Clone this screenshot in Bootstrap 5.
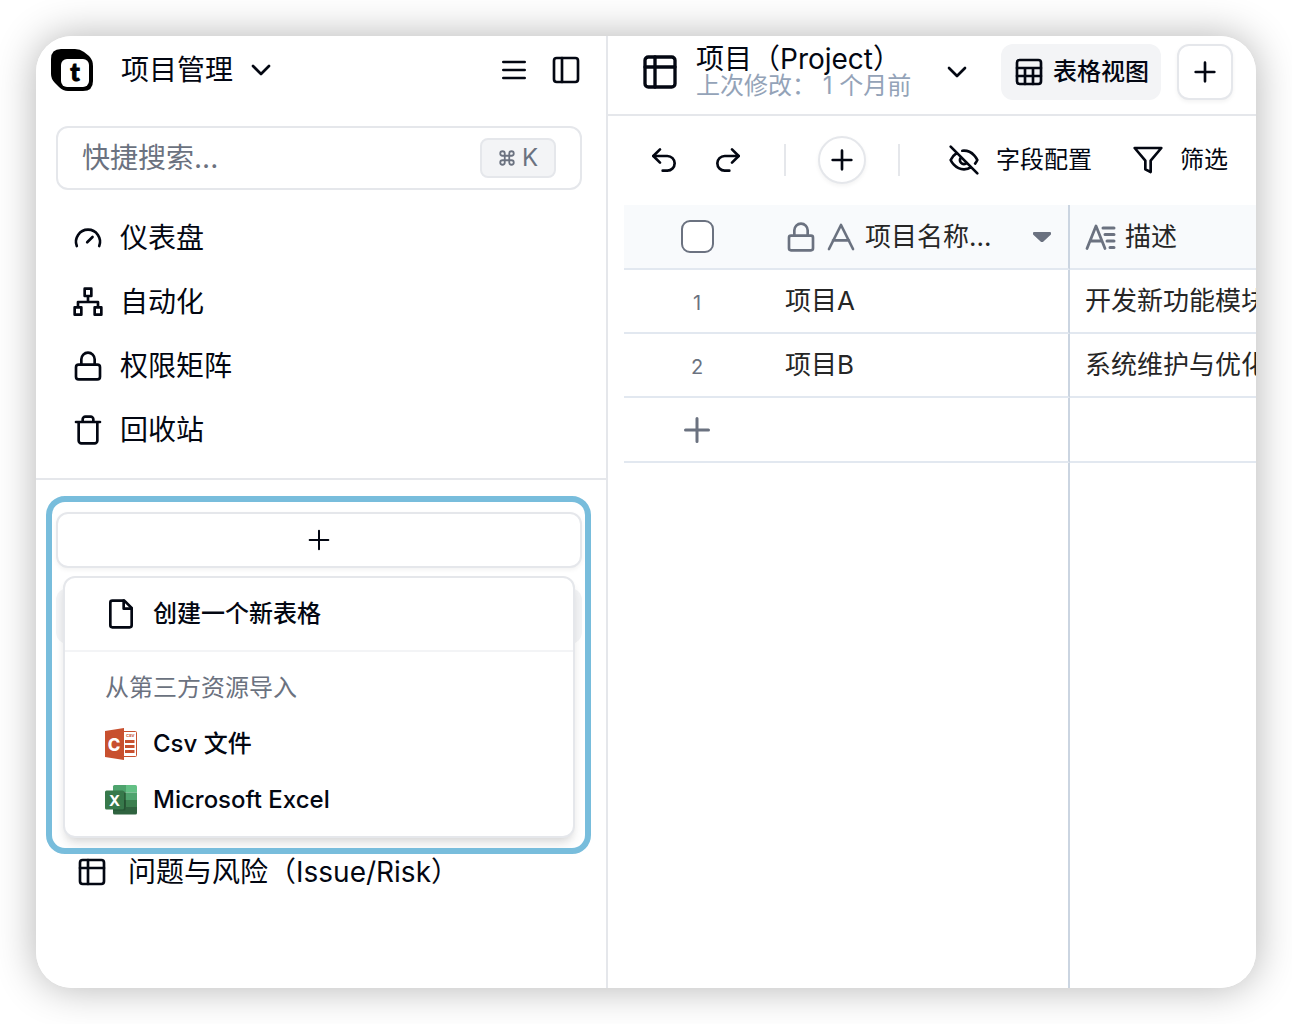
<!DOCTYPE html>
<html lang="zh-CN">
<head>
<meta charset="utf-8">
<meta name="viewport" content="width=device-width, initial-scale=1">
<title>项目管理</title>
<link href="https://cdn.jsdelivr.net/npm/bootstrap@5.3.0/dist/css/bootstrap.min.css" rel="stylesheet">
<style>
  :root { --ink: #030712; --line: #e5e7eb; --muted-ink: #6b7280; --soft: #f3f4f6; }
  body { font-family: Inter, "Noto Sans CJK SC", sans-serif; color: var(--ink); background: #fff; font-size: 28px; line-height: 40px; padding: 36px; }
  button, a { color: inherit; }
  a { text-decoration: none; }
  .plain-btn { border: 0; background: none; padding: 0; display: inline-flex; align-items: center; justify-content: center; }
  .ico { width: 32px; height: 32px; flex: none; fill: none; stroke: currentColor; stroke-width: 2; stroke-linecap: round; stroke-linejoin: round; display: block; }
  .ico-lg { width: 40px; height: 40px; }
  .app-window { min-height: calc(100vh - 72px); border-radius: 36px; overflow: hidden; background: #fff; }
  .app-shadow { border-radius: 36px; box-shadow: 0 0 40px rgba(0,0,0,.3); }

  .side { flex: 0 0 572px; border-right: 2px solid var(--line); }
  .side-head { height: 68px; padding: 0 24px 0 15px; }
  .brand-mark { width: 42px; height: 42px; flex: none; }
  .search-wrap { height: 64px; margin: 22px 24px 0 20px; padding: 0 24px; border: 2px solid var(--line); border-radius: 12px; }
  .search-wrap input { border: 0; padding: 0; font-size: 28px; line-height: 40px; color: var(--ink); box-shadow: none; background: none; }
  .search-wrap input::placeholder { color: var(--muted-ink); opacity: 1; }
  .key-hint { height: 40px; padding: 0 16px; gap: 6px; border: 2px solid var(--line); border-radius: 8px; background: var(--soft); color: var(--muted-ink); font-size: 24px; line-height: 36px; font-family: inherit; }
  .key-hint .ico { width: 18px; height: 18px; stroke-width: 2.4; }
  .side-nav { padding: 20px 24px 20px 20px; border-bottom: 2px solid var(--line); }
  .side-link { height: 56px; padding: 0 16px; border-radius: 12px; }
  .side-link.active { background: var(--soft); }
  .tables-area { padding: 32px 24px 0 20px; position: relative; }
  .outline-btn { border: 2px solid var(--line); border-radius: 12px; background: #fff; box-shadow: 0 2px 4px rgba(0,0,0,.05); height: 56px; }
  .table-list { padding-top: 20px; padding-bottom: 32px; }
  .table-list .side-link { padding: 0 20px; }
  .table-list .side-link + .side-link { margin-top: 200px; }

  .create-menu { position: absolute; top: 96px; left: 27px; right: 31px; border: 2px solid var(--line); border-radius: 12px; background: #fff; padding: 8px 0; box-shadow: 0 8px 12px -2px rgba(0,0,0,.1), 0 4px 8px -4px rgba(0,0,0,.1); font-size: 24px; z-index: 2; }
  .create-menu .menu-row { height: 56px; padding: 0 40px; width: 100%; justify-content: flex-start; }
  .create-menu hr { margin: 8px 0; border: 0; border-top: 2px solid var(--soft); opacity: 1; }
  .menu-row svg.pic { width: 32px; height: 32px; flex: none; }
  .callout-ring { position: absolute; top: 16px; left: 10px; right: 15px; height: 358px; border: 6px solid #78bddc; border-radius: 19px; pointer-events: none; z-index: 3; }

  .main-head { height: 80px; padding: 0 23px 6px 32px; border-bottom: 2px solid var(--line); }
  .head-title { font-size: 28px; line-height: 28px; font-weight: 400; }
  .head-sub { font-size: 24px; line-height: 26px; color: #94a3b8; }
  .head-toggle { margin-right: 28px; }
  .view-tab { height: 56px; padding: 0 12px; border-radius: 12px; background: var(--soft); font-size: 24px; }
  .add-view { width: 56px; }
  .tools { height: 88px; padding: 0 28px 0 40px; font-size: 24px; }
  .tool-rule { width: 2px; height: 32px; background: var(--line); flex: none; }
  .add-record { width: 48px; height: 48px; border-radius: 50%; }

  .sheet { margin: 1px 0 0 16px; }
  .sheet table { table-layout: fixed; border-collapse: separate; border-spacing: 0; width: 100%; height: 100%; font-size: 26px; line-height: 36px; color: #262626; }
  .sheet th, .sheet td { height: 64px; padding: 0 15px; border-bottom: 2px solid #e2e8f0; font-weight: 400; white-space: nowrap; overflow: hidden; vertical-align: middle; }
  .sheet thead th { height: 65px; background: #f8fafc; }
  .sheet .add-line td { height: 65px; }
  .sheet .name-cell { border-right: 2px solid #cbd5e1; padding-right: 10px; }
  .sheet .num-cell { text-align: center; color: var(--muted-ink); font-size: 20px; }
  .sheet .row-no { padding-top: 4px; }
  .sheet .filler td { height: auto; border-bottom: 0; }
  .tick.form-check-input { width: 33px; height: 33px; margin: 0; border: 2px solid var(--muted-ink); border-radius: 9px; float: none; }
  .gray { color: var(--muted-ink); }
</style>
<script src="https://cdn.jsdelivr.net/npm/bootstrap@5.3.0/dist/js/bootstrap.bundle.min.js"></script>
</head>
<body>
<div class="app-shadow">
<div class="app-window d-flex">

  <aside class="side d-flex flex-column">
    <header class="side-head d-flex align-items-center">
      <svg class="brand-mark" viewBox="0 0 42 42" aria-hidden="true">
        <path d="M10 0H24Q29 0 33 3L38 7Q42 11 42 17V32Q42 42 32 42H17Q12 42 8 38L4 34Q0 30 0 25V10Q0 0 10 0Z" fill="#000"/>
        <rect x="10" y="10" width="28" height="28" rx="6" fill="#fff"/>
        <text x="24" y="32" text-anchor="middle" font-family="Lato" font-weight="900" font-size="25" fill="#000" stroke="#000" stroke-width="1">t</text>
      </svg>
      <button class="plain-btn gap-2 ms-4 ps-1" type="button">项目管理
        <svg class="ico ms-1" viewBox="0 0 24 24"><path d="m6 9 6 6 6-6"/></svg></button>
      <button class="plain-btn ms-auto" type="button" aria-label="菜单"><svg class="ico" viewBox="0 0 24 24"><path d="M4 6h16M4 12h16M4 18h16"/></svg></button>
      <button class="plain-btn ms-3 ps-1" type="button" aria-label="侧栏"><svg class="ico" viewBox="0 0 24 24"><rect x="3" y="3" width="18" height="18" rx="2"/><path d="M9 3v18"/></svg></button>
    </header>

    <div class="search-wrap d-flex align-items-center">
      <input class="form-control" type="text" placeholder="快捷搜索..." aria-label="快捷搜索">
      <kbd class="key-hint d-flex align-items-center"><svg class="ico" viewBox="0 0 24 24"><path d="M15 6v12a3 3 0 1 0 3-3H6a3 3 0 1 0 3 3V6a3 3 0 1 0-3 3h12a3 3 0 1 0-3-3"/></svg>K</kbd>
    </div>

    <nav class="side-nav d-flex flex-column gap-2">
      <a class="side-link d-flex align-items-center gap-3" href="#"><svg class="ico" viewBox="0 0 24 24"><path d="m11.400 15.200 4-4M3.600 18a9 9 0 1 1 16.800 0"/></svg>仪表盘</a>
      <a class="side-link d-flex align-items-center gap-3" href="#"><svg class="ico" viewBox="0 0 24 24"><path d="M17 16h5v5.500h-5zM2 16h5v5.500H2zM9.500 2h5v5.500h-5zM4.500 16v-4h15v4M12 12V7.500"/></svg>自动化</a>
      <a class="side-link d-flex align-items-center gap-3" href="#"><svg class="ico" viewBox="0 0 24 24"><rect x="3" y="11" width="18" height="11" rx="2"/><path d="M7 11V7a5 5 0 0 1 10 0v4"/></svg>权限矩阵</a>
      <a class="side-link d-flex align-items-center gap-3" href="#"><svg class="ico" viewBox="0 0 24 24"><path d="M3 6h18M19 6v14c0 1-1 2-2 2H7c-1 0-2-1-2-2V6M8 6V4c0-1 1-2 2-2h4c1 0 2 1 2 2v2"/></svg>回收站</a>
    </nav>

    <section class="tables-area">
      <button class="plain-btn outline-btn w-100" type="button" aria-label="新建"><svg class="ico" viewBox="0 0 24 24"><path d="M5 12h14M12 5v14" stroke-width="1.500"/></svg></button>
      <div class="table-list">
        <div class="side-link active"></div>
        <a class="side-link d-flex align-items-center" href="#"><svg class="ico me-3" viewBox="0 0 24 24"><rect x="3" y="3" width="18" height="18" rx="2"/><path d="M3 9h18M9 3v18"/></svg><span class="ps-1">问题与风险（Issue/Risk）</span></a>
      </div>

      <div class="create-menu">
        <button class="plain-btn menu-row gap-3 fw-medium" type="button"><svg class="ico" viewBox="0 0 24 24"><path d="M14.500 2H5.500A1.500 1.500 0 0 0 4 3.500v17A1.500 1.500 0 0 0 5.500 22h13a1.500 1.500 0 0 0 1.500-1.500V7.500L14.500 2z"/><path d="M14 2v6h6"/></svg>创建一个新表格</button>
        <hr>
        <div class="menu-row d-flex align-items-center gray">从第三方资源导入</div>
        <button class="plain-btn menu-row gap-3 fw-medium" type="button">
          <svg class="pic" viewBox="0 0 32 32" aria-hidden="true"><rect x="17" y="3.500" width="14.500" height="25" rx="1" fill="#fff" stroke="#c8502f"/><path d="M0 3 19 0V32L0 29Z" fill="#c8502f"/><path d="M20 12h9.500v3H20zM20 17h9.500v3H20zM20 22h9.500v3H20z" fill="#c8502f"/><text x="21" y="9" font-family="Inter" font-size="4" font-weight="700" fill="#c8502f">CSV</text><text x="9" y="23" text-anchor="middle" font-family="Inter" font-size="17" font-weight="800" fill="#fff">C</text></svg>Csv 文件</button>
        <button class="plain-btn menu-row gap-3 fw-medium" type="button">
          <svg class="pic" viewBox="0 0 32 32" aria-hidden="true"><path d="M9.500 1H21V8.500H8V2.500Q8 1 9.500 1Z" fill="#4ea36d"/><path d="M21 1h9.500Q32 1 32 2.500V8.500H21Z" fill="#63c085"/><path d="M8 8.500h13V16H8z" fill="#3c7f4f"/><path d="M21 8.500h11V16H21z" fill="#4fa36e"/><path d="M8 16h13v7.500H8z" fill="#2d5f3c"/><path d="M21 16h11v7.500H21z" fill="#3c7f4f"/><path d="M8 23h24v6q0 1.500-1.500 1.500h-21Q8 30.500 8 29Z" fill="#2f633f"/><path d="M8 7.500h11q1.500 0 1.500 1.500v16q0 1.500-1.500 1.500H8Z" fill="#1f4a2c" opacity=".6"/><rect y="6.500" width="19" height="19" rx="1.500" fill="#37794b"/><text x="9.500" y="21.500" text-anchor="middle" font-family="Inter" font-size="15" font-weight="700" fill="#fff">X</text></svg>Microsoft Excel</button>
      </div>
      <div class="callout-ring"></div>
    </section>
  </aside>

  <main class="flex-grow-1 d-flex flex-column overflow-hidden">
    <header class="main-head d-flex align-items-center">
      <svg class="ico ico-lg" viewBox="0 0 24 24" aria-hidden="true"><rect x="3" y="3" width="18" height="18" rx="2"/><path d="M3 9h18M9 3v18"/></svg>
      <div class="ms-3 text-nowrap flex-grow-1">
        <h1 class="head-title m-0">项目（Project）</h1>
        <div class="head-sub">上次修改： 1 个月前</div>
      </div>
      <button class="plain-btn head-toggle" type="button" aria-label="展开"><svg class="ico" viewBox="0 0 24 24"><path d="m6 9 6 6 6-6"/></svg></button>
      <button class="plain-btn view-tab gap-2 fw-medium text-nowrap" type="button"><svg class="ico" viewBox="0 0 24 24"><rect x="3" y="3" width="18" height="18" rx="2"/><path d="M3 9h18M3 15h18M9 9v12M15 9v12"/></svg>表格视图</button>
      <button class="plain-btn outline-btn add-view ms-3" type="button" aria-label="添加视图"><svg class="ico" viewBox="0 0 24 24"><path d="M5 12h14M12 5v14"/></svg></button>
    </header>

    <div class="tools d-flex align-items-center justify-content-between text-nowrap">
      <button class="plain-btn" type="button" aria-label="撤销"><svg class="ico" viewBox="0 0 24 24"><path d="M9 14 4 9l5-5"/><path d="M4 9h10.500a5.500 5.500 0 0 1 0 11H11"/></svg></button>
      <button class="plain-btn" type="button" aria-label="重做"><svg class="ico" viewBox="0 0 24 24"><path d="m15 14 5-5-5-5"/><path d="M20 9H9.500a5.500 5.500 0 0 0 0 11H13"/></svg></button>
      <span class="tool-rule ms-2"></span>
      <button class="plain-btn outline-btn add-record" type="button" aria-label="添加记录"><svg class="ico" viewBox="0 0 24 24"><path d="M5 12h14M12 5v14"/></svg></button>
      <span class="tool-rule me-3"></span>
      <button class="plain-btn gap-3" type="button"><svg class="ico" viewBox="0 0 24 24"><path d="M9.880 9.880a3 3 0 1 0 4.240 4.240M10.730 5.080A10.430 10.430 0 0 1 12 5c7 0 10 7 10 7a13.160 13.160 0 0 1-1.670 2.680M6.610 6.610A13.526 13.526 0 0 0 2 12s3 7 10 7a9.740 9.740 0 0 0 5.390-1.610M2 2l20 20"/></svg>字段配置</button>
      <button class="plain-btn gap-3 ms-2" type="button"><svg class="ico" viewBox="0 0 24 24"><path d="M22 3H2l8 9.460V19l4 2v-8.540L22 3z"/></svg>筛选</button>
    </div>

    <div class="sheet flex-grow-1 d-flex">
      <table>
        <colgroup><col style="width:146px"><col style="width:300px"><col></colgroup>
        <thead>
          <tr>
            <th class="num-cell"><div class="d-flex justify-content-center"><input class="form-check-input tick" type="checkbox" aria-label="全选"></div></th>
            <th class="name-cell"><div class="d-flex align-items-center gap-2">
              <svg class="ico gray" viewBox="0 0 24 24"><rect x="3" y="11" width="18" height="11" rx="1.500"/><path d="M7 11V7a5 5 0 0 1 10 0v4"/></svg>
              <svg class="ico gray" viewBox="0 0 24 24"><path d="M3 21 12 3l9 18M6 14.500h12"/></svg>
              <span>项目名称...</span>
              <svg class="ico gray ms-auto" viewBox="0 0 32 32"><path d="M8 12h16v1L16.500 20h-1L8 13Z" fill="currentColor"/></svg>
            </div></th>
            <th><div class="d-flex align-items-center gap-2">
              <svg class="ico gray" viewBox="0 0 32 32"><path d="M2 27.500 11 5l9 22.500M6 20h11" stroke-width="2.800"/><path d="M18 7h11M20 13.500h9M22 20h7M25 26.500h4" stroke-width="3"/></svg>
              <span>描述</span></div></th>
          </tr>
        </thead>
        <tbody>
          <tr><td class="num-cell row-no">1</td><td class="name-cell">项目A</td><td>开发新功能模块</td></tr>
          <tr><td class="num-cell row-no">2</td><td class="name-cell">项目B</td><td>系统维护与优化</td></tr>
          <tr class="add-line"><td class="num-cell"><div class="d-flex justify-content-center"><button class="plain-btn gray" type="button" aria-label="新增行"><svg class="ico" viewBox="0 0 32 32"><path d="M4.500 16h23M16 4.500v23" stroke-width="3"/></svg></button></div></td><td class="name-cell"></td><td></td></tr>
          <tr class="filler"><td></td><td class="name-cell"></td><td></td></tr>
        </tbody>
      </table>
    </div>
  </main>
</div>
</div>
</body>
</html>
